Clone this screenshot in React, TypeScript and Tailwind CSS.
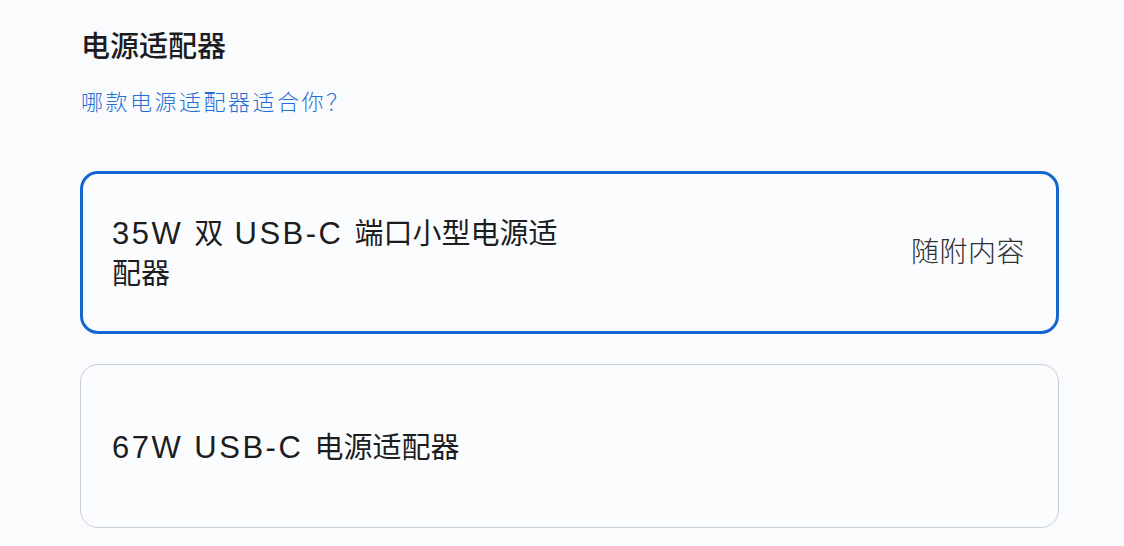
const FONT = {
  fontFamily: '"Liberation Sans", "Noto Sans CJK SC", sans-serif',
};

// latin runs in the reference are set wider than the CJK glyphs
function Latin({ children }: { children: string }) {
  return <span className="text-[31px] tracking-[2.5px]">{children}</span>;
}

function Han({ children }: { children: string }) {
  return <span>{children}</span>;
}

function OptionCard({
  title,
  selected,
  aside,
}: {
  title: React.ReactNode;
  selected?: boolean;
  aside?: string;
}) {
  return (
    <div
      className={
        selected
          ? "flex items-center justify-between h-[163px] rounded-[18px] border-[3px] border-[#1466cf] pl-[29px] pr-[31px] bg-[#fbfcfe]"
          : "flex items-center justify-between h-[164px] rounded-[18px] border border-[#c9cdd6] pl-[31px] pr-[33px] bg-[#fbfcfe]"
      }
    >
      <p className="w-[462px] text-[29px] leading-[40px] text-[#1d1d1f] pt-[3px]">
        {title}
      </p>
      {aside && (
        <div className="text-[28px] leading-[36px] font-light text-[#2f2f36] tracking-[0.5px]">
          {aside}
        </div>
      )}
    </div>
  );
}

export default function App() {
  return (
    <div
      style={FONT}
      className="w-[1124px] h-[546px] overflow-hidden bg-[#fafbfd] pl-[81px] pr-[65px] pt-[28px]"
    >
      <h2 className="text-[29px] leading-[38px] font-medium text-[#1d1d1f]">
        电源适配器
      </h2>
      <a className="block mt-[22px] text-[22px] leading-[30px] tracking-[2.5px] text-[#1f6fd4] font-light">
        哪款电源适配器适合你？
      </a>
      <div className="-ml-px mt-[53px] flex flex-col gap-[30px]">
        <OptionCard
          title={
            <>
              <Latin>35W </Latin>
              <Han>双</Han>
              <Latin> USB-C </Latin>
              <Han>端口小型电源适</Han>
              <Han>配器</Han>
            </>
          }
          selected
          aside="随附内容"
        />
        <OptionCard
          title={
            <>
              <Latin>67W USB-C </Latin>
              <Han>电源适配器</Han>
            </>
          }
        />
      </div>
    </div>
  );
}
